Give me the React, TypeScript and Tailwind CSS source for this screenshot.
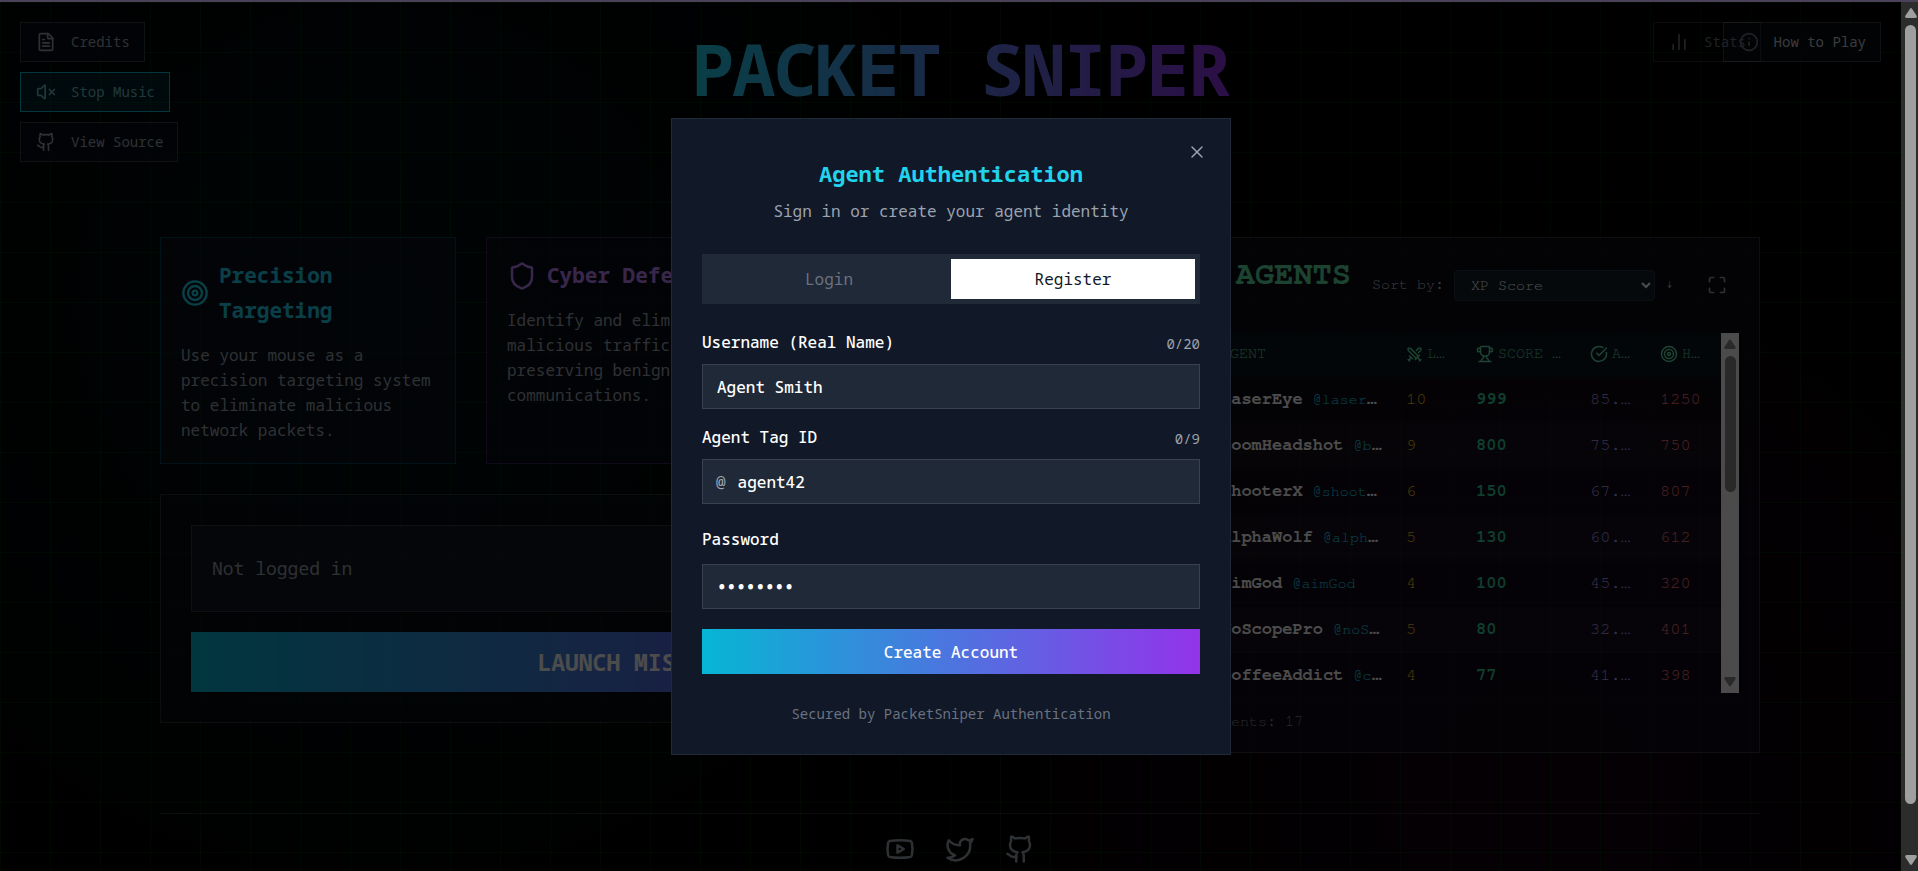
import React from "react";
import {
  ChartNoAxesColumn,
  CircleCheckBig,
  FileText,
  Github,
  Info,
  Maximize,
  Shield,
  Swords,
  Target,
  Trophy,
  Twitter,
  VolumeX,
  X,
  Youtube,
} from "lucide-react";

const agents = [
  { name: "LaserEye", tag: "@laser", cut: true, level: 10, score: 999, acc: "85.…", hits: 1250 },
  { name: "BoomHeadshot", tag: "@b", cut: true, level: 9, score: 800, acc: "75.…", hits: 750 },
  { name: "ShooterX", tag: "@shoot", cut: true, level: 6, score: 150, acc: "67.…", hits: 807 },
  { name: "AlphaWolf", tag: "@alph", cut: true, level: 5, score: 130, acc: "60.…", hits: 612 },
  { name: "aimGod", tag: "@aimGod", cut: false, level: 4, score: 100, acc: "45.…", hits: 320 },
  { name: "NoScopePro", tag: "@noS", cut: true, level: 5, score: 80, acc: "32.…", hits: 401 },
  { name: "CoffeeAddict", tag: "@c", cut: true, level: 4, score: 77, acc: "41.…", hits: 398 },
];

const navButton = "flex h-10 items-center gap-[15px] border pl-[15px] pr-3.5 text-sm";

function TopButtons() {
  return (
    <>
      <nav className="absolute left-5 top-5 flex flex-col items-start gap-2.5">
        <button className={`${navButton} border-white/20 bg-[#0a0f1a]/80 text-[#9ca3af]`}>
          <FileText size={20} />
          Credits
        </button>
        <button className={`${navButton} border-[#06b6d4] bg-[#06b6d4]/15 text-[#6cbccb]`}>
          <VolumeX size={20} />
          Stop Music
        </button>
        <a href="#source" className={`${navButton} border-white/20 bg-[#0a0f1a]/80 text-[#9ca3af]`}>
          <Github size={20} />
          View Source
        </a>
      </nav>
      <button className={`${navButton} absolute right-[37px] top-5 border-white/20 bg-[#0a1120]/60 text-[#c3c7ce]`}>
        <Info size={20} className="text-[#6b7280]" />
        How to Play
      </button>
      <button className={`${navButton} absolute right-[157px] top-5 border-white/15 text-[#6b7280]`}>
        <ChartNoAxesColumn size={20} />
        Stats
      </button>
    </>
  );
}

function Features() {
  return (
    <div className="grid grid-cols-3 gap-[30px]">
      <article className="border border-[#06b6d4]/30 bg-[#0d1424]/50 p-5">
        <h2 className="mb-[15px] flex items-center gap-2.5 text-[21px] font-bold leading-[35px] text-[#22d3ee]">
          <Target size={28} className="shrink-0" />
          Precision Targeting
        </h2>
        <p className="leading-[25px] text-[#9ca3af]">
          Use your mouse as a precision targeting system to eliminate malicious network packets.
        </p>
      </article>
      <article className="border border-[#a855f7]/30 bg-[#0d1020]/50 p-5">
        <h2 className="mb-[15px] flex items-center gap-2.5 whitespace-nowrap text-[21px] font-bold leading-[35px] text-[#c084fc]">
          <Shield size={30} className="shrink-0" />
          Cyber Defense
        </h2>
        <p className="leading-[25px] text-[#9ca3af]">
          Identify and eliminate malicious traffic while preserving benign communications.
        </p>
      </article>
    </div>
  );
}

function Mission() {
  return (
    <section className="mt-[30px] border border-white/15 bg-[#0b0f1c]/50 p-[30px]">
      <p className="border border-white/15 bg-[#141d26]/60 p-5 text-lg leading-[45px] text-[#9ca3af]">
        Not logged in
      </p>
      <button className="mt-5 block h-[60px] w-full bg-linear-to-r/srgb from-[#06b6d4] to-[#9333ea] text-[23px] font-bold text-white">
        LAUNCH MISSION
      </button>
    </section>
  );
}

function Leaderboard() {
  const head = "px-2.5 pb-0.5 text-left font-normal";
  const headInner = "flex items-center gap-1 whitespace-nowrap";
  const cell = "px-2.5 pb-0.5";
  return (
    <section className="border border-white/15 bg-[#120e1c]/60 px-5 pb-[18px] pt-5 font-['FreeMono','Nimbus_Mono_PS','Courier_Prime','Courier_10_Pitch','Courier_New','Liberation_Mono',monospace]">
      <div className="flex items-center justify-between">
        <h2 className="mb-6 whitespace-nowrap text-[32px] font-bold leading-8 text-[#5fe0a8]">TOP AGENTS</h2>
        <div className="mb-0.5 mr-3 flex items-center text-[15px] text-[#c3c7ce]">
          <label htmlFor="sort">Sort by:</label>
          <select
            id="sort"
            className="ml-2.5 h-[31px] w-[201px] rounded border border-[#1f3540] bg-[#141f28] pl-3 text-[15px] text-white"
          >
            <option>XP Score</option>
          </select>
          <button aria-label="Sort descending" className="ml-2.5 w-[9px]">↓</button>
          <button aria-label="Expand" className="ml-[33px] text-[#9ca3af]">
            <Maximize size={20} />
          </button>
        </div>
      </div>
      <div className="mt-[19px] flex h-[360px] overflow-hidden">
        <div className="min-w-0 flex-1">
          <table className="w-full table-fixed border-collapse text-[17px]">
            <colgroup>
              <col className="w-[52px]" />
              <col />
              <col className="w-[70px]" />
              <col className="w-[114px]" />
              <col className="w-[70px]" />
              <col className="w-[71px]" />
            </colgroup>
            <thead className="bg-[#0b1a20]/80 text-[15px] text-[#64dfa9]">
              <tr className="h-11">
                <th className={head}>#</th>
                <th className={head}>AGENT</th>
                <th className={head}><span className={headInner}><Swords size={17} className="shrink-0" />L…</span></th>
                <th className={head}><span className={headInner}><Trophy size={18} className="shrink-0" />SCORE …</span></th>
                <th className={head}><span className={headInner}><CircleCheckBig size={18} className="shrink-0" />A…</span></th>
                <th className={head}><span className={headInner}><Target size={18} className="shrink-0" />H…</span></th>
              </tr>
            </thead>
            <tbody>
              {agents.map((a, i) => (
                <tr key={a.name} className="h-[46px] whitespace-nowrap even:bg-white/3">
                  <td className={`${cell} text-[#9ca3af]`}>{i + 1}</td>
                  <td className={`${cell} font-bold text-white`}>
                    {a.name} <span className="text-[15px] font-normal text-[#22e0ff]">{a.tag}</span>
                    {a.cut && "…"}
                  </td>
                  <td className={`${cell} text-[#ffc81f]`}>{a.level}</td>
                  <td className={`${cell} font-bold text-[#34d399]`}>{a.score}</td>
                  <td className={`${cell} text-[#b0a0ff]`}>{a.acc}</td>
                  <td className={`${cell} text-[#ff7a80]`}>{a.hits}</td>
                </tr>
              ))}
            </tbody>
          </table>
        </div>
        <div aria-hidden="true" className="flex w-[18px] flex-col items-center bg-[#fafafa] py-1.5">
          <svg width="12" height="10" viewBox="0 0 12 10" fill="#8b8b8b"><path d="M5 1.2Q6 0 7 1.2L11.6 8Q12 10 10.500 10H1.500Q0 10 .4 8Z" /></svg>
          <span className="mt-[7px] h-[136px] w-[11px] rounded-full bg-[#8b8b8b]" />
          <svg className="mt-auto" width="12" height="10" viewBox="0 0 12 10" fill="#8b8b8b"><path d="M5 8.800Q6 10 7 8.800L11.600 2Q12 0 10.500 0H1.500Q0 0 .4 2Z" /></svg>
        </div>
      </div>
      <p className="mt-[17px] text-[15px] leading-6 text-[#858b97]">Total Agents: 17</p>
    </section>
  );
}

const field =
  "block h-[45px] w-full border border-[#374151] bg-[#1f2937] px-3.5 font-medium text-white outline-none placeholder:text-white placeholder:opacity-100";

function AuthDialog() {
  return (
    <div
      role="dialog"
      aria-labelledby="auth-title"
      className="relative w-full max-w-[560px] border border-[#1f2937] bg-[#111827] p-[30px] text-white"
    >
      <button aria-label="Close" className="absolute right-[23px] top-[23px] text-[#9ca3af]">
        <X size={20} strokeWidth={1.75} />
      </button>
      <h2 id="auth-title" className="pt-2 text-center text-[22px] font-bold leading-8 text-[#22d3ee]">
        Agent Authentication
      </h2>
      <p className="mt-2.5 text-center leading-6 text-[#9ca3af]">Sign in or create your agent identity</p>
      <div role="tablist" className="mt-[31px] grid grid-cols-2 bg-[#1f2937] p-[5px]">
        <button role="tab" aria-selected="false" className="h-10 text-[#6b7280]">Login</button>
        <button role="tab" aria-selected="true" className="h-10 bg-white text-[#111827]">Register</button>
      </div>
      <form className="mt-[26px]">
        <div className="mb-2.5 flex h-6 items-center justify-between">
          <label htmlFor="username" className="font-medium">Username (Real Name)</label>
          <span className="pt-1 text-sm text-[#9ca3af]">0/20</span>
        </div>
        <input id="username" className={field} placeholder="Agent Smith" />
        <div className="mb-2.5 mt-4 flex h-6 items-center justify-between">
          <label htmlFor="tag" className="font-medium">Agent Tag ID</label>
          <span className="pt-1 text-sm text-[#9ca3af]">0/9</span>
        </div>
        <div className="flex h-[45px] items-center border border-[#374151] bg-[#1f2937] pl-[13px]">
          <span className="text-[#9ca3af]">@</span>
          <input
            id="tag"
            className="ml-3 min-w-0 flex-1 bg-transparent font-medium outline-none placeholder:text-white placeholder:opacity-100"
            placeholder="agent42"
          />
        </div>
        <label htmlFor="password" className="mb-2.5 mt-5 block font-medium leading-[30px]">Password</label>
        <input id="password" type="password" className={`${field} placeholder:font-black`} placeholder="••••••••" />
        <button type="button" className="mt-5 block h-[45px] w-full bg-linear-to-r/srgb from-[#06b6d4] to-[#9333ea] font-medium">
          Create Account
        </button>
      </form>
      <p className="mt-[30px] text-center text-sm leading-5 text-[#6b7280]">Secured by PacketSniper Authentication</p>
    </div>
  );
}

function WindowScrollbar() {
  return (
    <div aria-hidden="true" className="absolute bottom-0 right-0 top-0 flex w-[17px] flex-col items-center bg-[#2c2c2c] py-1.5 pl-0.5">
      <svg className="shrink-0" width="12" height="10" viewBox="0 0 12 10" fill="#9f9f9f"><path d="M5 .7Q6-.5 7 .7L11.800 8Q12 10 10.500 10H1.500Q0 10 .2 8Z" /></svg>
      <span className="mt-[7px] h-[779px] w-[11px] rounded-full bg-[#9f9f9f]" />
      <svg className="mt-auto shrink-0" width="12" height="10" viewBox="0 0 12 10" fill="#9f9f9f"><path d="M5 9.300Q6 10.500 7 9.300L11.800 2Q12 0 10.500 0H1.500Q0 0 .2 2Z" /></svg>
    </div>
  );
}

export default function App() {
  return (
    <div className="relative min-h-screen overflow-hidden border-t-2 border-[#4a4258] bg-black pl-0.5 font-['Noto_Sans_Mono','DejaVu_Sans_Mono','Liberation_Mono',monospace] text-base">
      <div className="absolute inset-0 bg-[radial-gradient(circle_at_20%_35%,rgba(6,182,212,0.08),transparent_45%),radial-gradient(circle_at_80%_90%,rgba(190,24,160,0.09),transparent_45%)]" />
      <div className="absolute inset-0 bg-[linear-gradient(to_right,rgba(0,255,0,0.1)_1px,transparent_1px),linear-gradient(to_bottom,rgba(0,255,0,0.1)_1px,transparent_1px)] bg-[size:50px_50px]" />
      <TopButtons />
      <main className="relative mx-auto max-w-[1600px] pt-[30px]">
        <h1 className="mx-auto w-fit bg-linear-to-r/srgb from-[#22d3ee] to-[#9333ea] bg-clip-text text-center text-7xl font-bold leading-[72px] tracking-tight text-transparent">
          PACKET SNIPER
        </h1>
        <div className="mt-[133px] grid grid-cols-[minmax(0,948fr)_minmax(0,622fr)] gap-[30px]">
          <div>
            <Features />
            <Mission />
          </div>
          <Leaderboard />
        </div>
        <footer className="mt-[60px] flex justify-center gap-[30px] border-t border-white/15 pt-5 text-[#9ca3af]">
          <a href="#youtube" aria-label="YouTube"><Youtube size={30} /></a>
          <a href="#twitter" aria-label="Twitter"><Twitter size={30} /></a>
          <a href="#github" aria-label="GitHub"><Github size={30} /></a>
        </footer>
      </main>
      <div className="absolute inset-0 flex items-center justify-center bg-black/70 pr-4">
        <AuthDialog />
      </div>
      <WindowScrollbar />
    </div>
  );
}
